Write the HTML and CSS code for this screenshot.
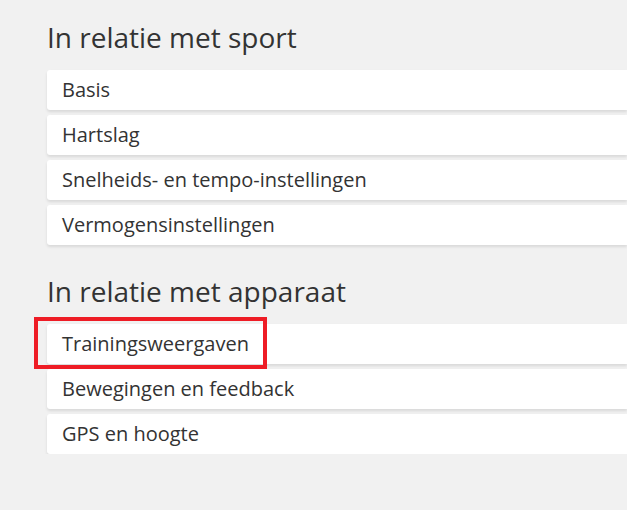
FILE: index.html
```html
<!DOCTYPE html>
<html lang="nl">
<head>
<meta charset="utf-8">
<link rel="stylesheet" href="styles.css">
</head>
<body>
<div class="page">
  <section class="group group-first">
    <h2 class="group-title">In relatie met sport</h2>
    <ul class="list">
      <li class="item">Basis</li>
      <li class="item">Hartslag</li>
      <li class="item">Snelheids- en tempo-instellingen</li>
      <li class="item">Vermogensinstellingen</li>
    </ul>
  </section>
  <section class="group">
    <h2 class="group-title">In relatie met apparaat</h2>
    <ul class="list">
      <li class="item item-marked">Trainingsweergaven<span class="mark"></span></li>
      <li class="item">Bewegingen en feedback</li>
      <li class="item">GPS en hoogte</li>
    </ul>
  </section>
</div>
</body>
</html>
```

FILE: styles.css
```css
html, body {
  margin: 0;
  padding: 0;
  background: #f1f1f1;
}
body {
  font-family: "Open Sans", "Liberation Sans", sans-serif;
  color: #333;
}
.page {
  padding: 0 0 0 47px;
}
.group {
  padding-top: 27px;
}
.group-first {
  padding-top: 18px;
}
.group-title {
  margin: 0 0 14px 0;
  font-size: 28px;
  font-weight: 400;
  line-height: 38px;
  color: #333;
}
.list {
  list-style: none;
  margin: 0;
  padding: 0;
  display: flex;
  flex-direction: column;
  gap: 5px;
}
.item {
  position: relative;
  height: 40px;
  line-height: 40px;
  padding: 0 15px;
  background: #fff;
  border-radius: 3px 0 0 3px;
  box-shadow: 0 2px 3px rgba(0, 0, 0, 0.10);
  font-size: 20px;
  color: #333;
}
.mark {
  position: absolute;
  left: -13px;
  top: -7px;
  width: 233px;
  height: 52px;
  box-sizing: border-box;
  border: 4px solid #ee1c25;
}
```
